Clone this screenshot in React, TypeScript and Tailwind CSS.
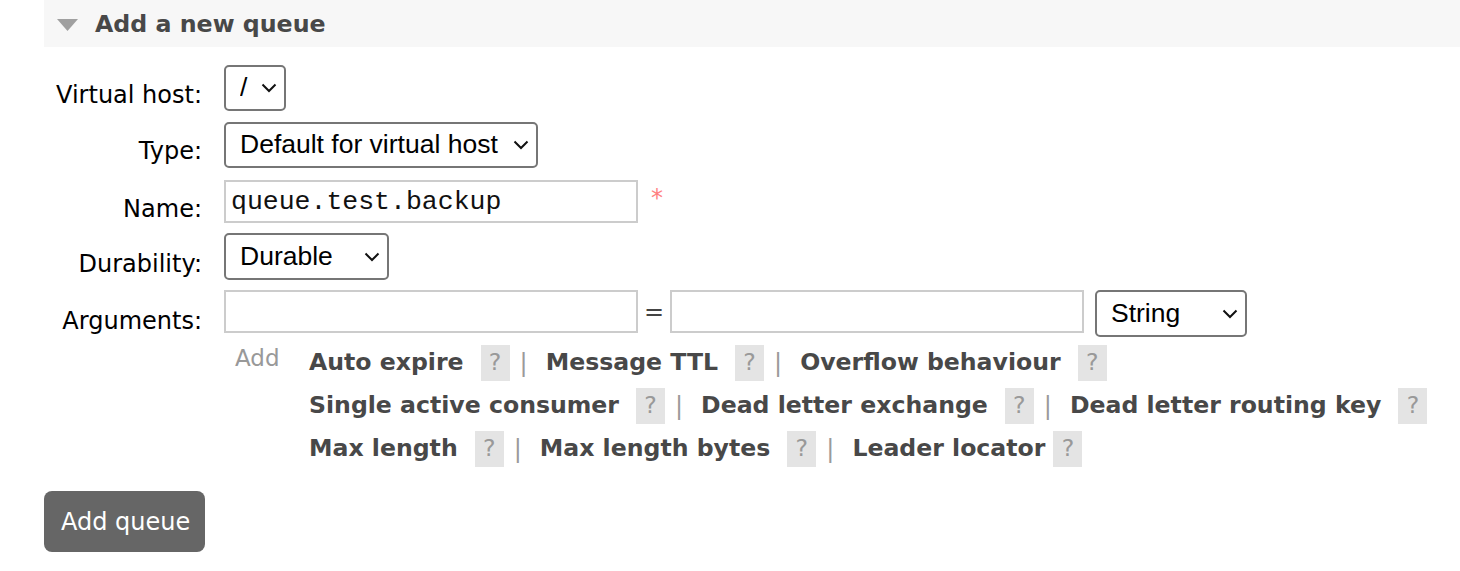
import { ReactNode } from "react";

const sans = "font-['DejaVu_Sans',Verdana,sans-serif]";
const ctl = "font-['Liberation_Sans',Arial,sans-serif]";

type Arg = { label: string; tight?: boolean };

const lines: Arg[][] = [
    [{ label: "Auto expire" }, { label: "Message TTL" }, { label: "Overflow behaviour" }],
    [
        { label: "Single active consumer" },
        { label: "Dead letter exchange" },
        { label: "Dead letter routing key" },
    ],
    [{ label: "Max length" }, { label: "Max length bytes" }, { label: "Leader locator", tight: true }],
];

const Chevron = () => (
    <svg
        width="16"
        height="10"
        viewBox="0 0 16 10"
        className="pointer-events-none absolute right-[9px] top-1/2 -translate-y-1/2 w-[16px] h-[10px]"
    >
        <polyline points="1.5,1.5 8,8 14.5,1.5" fill="none" stroke="#111" strokeWidth="2" />
    </svg>
);

const FakeSelect = ({ value, width, height = "h-[46px]" }: { value: string; width: string; height?: string }) => (
    <div className={`relative ${width} ${height} shrink-0`}>
        <select
            defaultValue={value}
            className={`${ctl} w-full h-full appearance-none border-2 border-[#767676] rounded-[5px] bg-white pl-[14px] text-[26.5px] text-black outline-none`}
        >
            <option>{value}</option>
        </select>
        <Chevron />
    </div>
);

const Row = ({
    label,
    children,
    className = "",
    pad = "pt-[15px]",
}: {
    label: string;
    children: ReactNode;
    className?: string;
    pad?: string;
}) => (
    <div className={`flex items-start ${className}`}>
        <div className={`w-[158px] shrink-0 ${pad} text-right text-[24px] leading-[28px] text-black`}>{label}</div>
        <div className="ml-[22px] flex items-start">{children}</div>
    </div>
);

const TextBox = ({ value = "" }: { value?: string }) => (
    <input
        readOnly
        defaultValue={value}
        className="w-[414px] h-[43px] shrink-0 border-2 border-[#cccccc] bg-white pl-[5px] font-['Liberation_Mono','Courier_New',monospace] text-[26.5px] text-[#111] outline-none"
    />
);

const Help = () => (
    <span className="inline-flex w-[29px] h-[36px] items-center justify-center bg-[#e4e4e4] text-[23.6px] text-[#999999]">?</span>
);

export default function App() {
    return (
        <div className={`${sans} w-[1460px] h-[571px] bg-white overflow-hidden`}>
            <div className="ml-[44px] h-[47px] bg-[#f7f7f7] flex items-center">
                <svg width="21" height="12" viewBox="0 0 21 12" className="ml-[13px] mt-[2px]">
                    <polygon points="0,0 21,0 10.5,12" fill="#a0a0a0" />
                </svg>
                <h2 className="ml-[17px] mt-[3px] text-[23.7px] font-bold text-[#484848] leading-none">Add a new queue</h2>
            </div>

            <div className="ml-[44px] mt-[18px]">
                <Row label="Virtual host:" pad="pt-[16px]">
                    <FakeSelect value="/" width="w-[62px]" />
                </Row>
                <Row label="Type:" className="mt-[11px]">
                    <FakeSelect value="Default for virtual host" width="w-[314px]" />
                </Row>
                <Row label="Name:" className="mt-[12px]">
                    <TextBox value="queue.test.backup" />
                    <span className="ml-[13px] mt-[4px] text-[24px] leading-[28px] text-[#ff7f7f]">*</span>
                </Row>
                <Row label="Durability:" className="mt-[10px]" pad="pt-[17px]">
                    <FakeSelect value="Durable" width="w-[165px]" height="h-[47px]" />
                </Row>
                <Row label="Arguments:" className="mt-[10px]" pad="pt-[17px]">
                    <TextBox />
                    <span className="w-[32px] h-[43px] flex items-center justify-center text-[24px] text-[#444444]">=</span>
                    <TextBox />
                    <div className="ml-[11px]">
                        <FakeSelect value="String" width="w-[152px]" height="h-[47px]" />
                    </div>
                </Row>
            </div>

            <div className="flex pl-[224px] mt-[4px]">
                <div className="w-[85px] shrink-0 pl-[11px] pt-[3px] text-[23px] leading-[28px] text-[#999999]">Add</div>
                <div className="flex flex-col">
                    {lines.map((line, i) => (
                        <div key={i} className="flex items-center h-[43px] whitespace-nowrap">
                            {line.map((arg, j) => (
                                <div key={arg.label} className="flex items-center">
                                    <span className="text-[23.6px] font-bold text-[#484848]">{arg.label}</span>
                                    <span className={arg.tight ? "ml-[8px]" : "ml-[17px]"}>
                                        <Help />
                                    </span>
                                    {j < line.length - 1 && (
                                        <span className="ml-[10px] mr-[18px] text-[24px] text-[#9a9a9a]">|</span>
                                    )}
                                </div>
                            ))}
                        </div>
                    ))}
                </div>
            </div>

            <button className="ml-[44px] mt-[21px] h-[61px] w-[161px] rounded-[8px] bg-[#666666] text-left pl-[17px] text-[24px] text-white">
                Add queue
            </button>
        </div>
    );
}
